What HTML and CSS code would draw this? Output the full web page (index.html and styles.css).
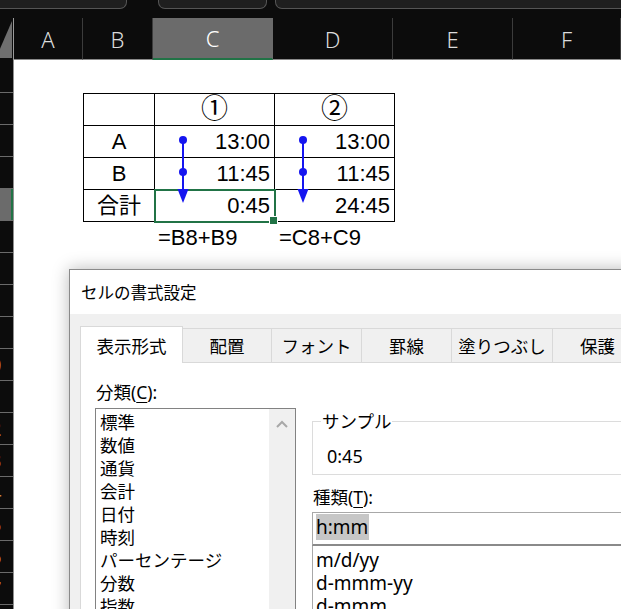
FILE: index.html
```html
<!DOCTYPE html>
<html lang="ja">
<head>
    <meta charset="utf-8">
    <title>セルの書式設定</title>
    <link rel="stylesheet" href="styles.css">
</head>
<body>
    <div class="toolbar">
        <div class="pill pill-name"></div>
        <div class="pill pill-font"></div>
        <div class="pill pill-size"></div>
    </div>

    <!-- column headers -->
    <div class="col-heads">
        <div class="corner">
            <svg width="13" height="42" viewBox="0 0 13 42"><polygon points="12,3 12,40 -4,40" fill="#6f6f6f"/></svg>
        </div>
        <div class="col-head">A</div>
        <div class="col-head">B</div>
        <div class="col-head selected">C</div>
        <div class="col-head">D</div>
        <div class="col-head">E</div>
        <div class="col-head">F</div>
    </div>

    <div class="sheet">
        <div class="row-heads">
            <div class="row-head"><span>1</span></div>
            <div class="row-head"><span>2</span></div>
            <div class="row-head"><span>3</span></div>
            <div class="row-head"><span>4</span></div>
            <div class="row-head selected"><span>5</span></div>
            <div class="row-head"><span>6</span></div>
            <div class="row-head"><span>7</span></div>
            <div class="row-head"><span>8</span></div>
            <div class="row-head"><span>9</span></div>
            <div class="row-head"><span>10</span></div>
            <div class="row-head"><span>11</span></div>
            <div class="row-head"><span>12</span></div>
            <div class="row-head"><span>13</span></div>
            <div class="row-head"><span>14</span></div>
            <div class="row-head"><span>15</span></div>
            <div class="row-head"><span>16</span></div>
            <div class="row-head"><span>17</span></div>
            <div class="row-head"><span>18</span></div>
        </div>

        <div class="cells">
            <div class="table-wrap">
                <table class="data">
                    <colgroup><col class="col-b"><col class="col-c"><col class="col-d"></colgroup>
                    <tr><td></td><td class="center circ">①</td><td class="center circ">②</td></tr>
                    <tr><td class="center">A</td><td class="num">13:00</td><td class="num">13:00</td></tr>
                    <tr><td class="center">B</td><td class="num">11:45</td><td class="num">11:45</td></tr>
                    <tr><td class="center">合計</td><td class="num active">0:45</td><td class="num">24:45</td></tr>
                </table>
                <!-- blue trace arrows drawn over the table -->
                <svg class="arrows" width="311" height="128" viewBox="0 0 311 128">
                    <g fill="#1515f0" stroke="#1515f0">
                        <line x1="100" y1="47" x2="100" y2="97" stroke-width="2"/>
                        <circle cx="100" cy="47" r="4" stroke="none"/>
                        <circle cx="100" cy="79" r="4" stroke="none"/>
                        <polygon points="94.5,96 105.5,96 100,110" stroke="none"/>
                        <line x1="220" y1="47" x2="220" y2="97" stroke-width="2"/>
                        <circle cx="220" cy="47" r="4" stroke="none"/>
                        <circle cx="220" cy="79" r="4" stroke="none"/>
                        <polygon points="214.5,96 225.5,96 220,110" stroke="none"/>
                    </g>
                </svg>
            </div>
            <div class="formulas">
                <span>=B8+B9</span>
                <span>=C8+C9</span>
            </div>
        </div>
    </div>

    <!-- Format Cells dialog -->
    <div class="dialog">
        <div class="dialog-title">セルの書式設定</div>
        <div class="dialog-body">
            <div class="tabs">
                <div class="tab active w103">表示形式</div>
                <div class="tab w89">配置</div>
                <div class="tab w90">フォント</div>
                <div class="tab w90">罫線</div>
                <div class="tab w101">塗りつぶし</div>
                <div class="tab w90">保護</div>
            </div>
            <div class="panel">
                <div class="left-col">
                    <div class="field-label">分類(<u>C</u>):</div>
                    <div class="listbox">
                        <div class="list-items">
                            <div>標準</div>
                            <div>数値</div>
                            <div>通貨</div>
                            <div>会計</div>
                            <div>日付</div>
                            <div>時刻</div>
                            <div>パーセンテージ</div>
                            <div>分数</div>
                            <div>指数</div>
                            <div>文字列</div>
                        </div>
                        <div class="scrollbar">
                            <svg width="12" height="8" viewBox="0 0 12 8"><polyline points="1,7 6,2 11,7" fill="none" stroke="#a8a8a8" stroke-width="2"/></svg>
                        </div>
                    </div>
                </div>
                <div class="right-col">
                    <fieldset class="sample">
                        <legend>サンプル</legend>
                        <div class="sample-value">0:45</div>
                    </fieldset>
                    <div class="field-label">種類(<u>T</u>):</div>
                    <div class="type-input"><span class="sel">h:mm</span></div>
                    <div class="type-list">
                        <div>m/d/yy</div>
                        <div>d-mmm-yy</div>
                        <div>d-mmm</div>
                        <div>mmm-yy</div>
                    </div>
                </div>
            </div>
        </div>
    </div>
</body>
</html>
```

FILE: styles.css
```css
* { box-sizing: border-box; }

html, body { margin: 0; height: 100%; }

body {
    background-color: #0c0c0c;
    overflow: hidden;
    position: relative;
    font-family: "Noto Sans", "Noto Sans CJK JP", sans-serif;
}

/* --- TOP STRIP --- */
.toolbar { display: flex; height: 18px; }
.pill {
    height: 9px;
    background-color: #1f1f1f;
    border: 1px solid #555;
    border-top: none;
    border-radius: 0 0 7px 7px;
}
.pill-name { width: 135px; margin-left: -8px; }
.pill-font { width: 109px; margin-left: 31px; }
.pill-size { flex: 1; margin-left: 8px; margin-right: -12px; }

/* --- COLUMN HEADERS --- */
.col-heads {
    display: grid;
    grid-template-columns: 14px 69px 70px 120px 120px 120px 1fr;
    height: 42px;
}
.corner { border-right: 1px solid #9a9a9a; }
.corner svg { display: block; }
.col-head {
    display: flex;
    align-items: center;
    justify-content: center;
    color: #dcdcdc;
    font-size: 22px;
    font-weight: 300;
    border-right: 1px solid #3c3c3c;
    border-bottom: 1px solid #8a8a8a;
}
.col-head.selected {
    background-color: #6b6b6b;
    color: #fff;
    border-right-color: #6b6b6b;
    border-bottom: 2px solid #217346;
}

/* --- SHEET --- */
.sheet { display: flex; height: 549px; }
.row-heads { width: 14px; flex: none; border-right: 1px solid #8f8f8f; }
.row-head {
    height: 32px;
    border-bottom: 1px solid #6a6a6a;
    overflow: hidden;
}
.row-head:first-child { height: 33px; }
.row-head span {
    display: block;
    width: 44px;
    margin-left: -32px;
    text-align: center;
    line-height: 31px;
    font-size: 20px;
    color: #c98846;
}
.row-head.selected { background-color: #6b6b6b; box-shadow: inset -2px 0 0 #217346; }
.row-head.selected span { color: #6b6b6b; }

.cells { flex: 1; background-color: #fff; }

.table-wrap { position: relative; width: 311px; margin: 33px 0 0 69px; }
.data {
    border-collapse: collapse;
    table-layout: fixed;
    width: 311px;
    font-family: "Liberation Sans", "Noto Sans CJK JP", sans-serif;
    font-size: 22px;
    color: #000;
}
.col-b { width: 71px; }
.col-c, .col-d { width: 120px; }
.data td { border: 1px solid #000; height: 32px; padding: 0 4px; line-height: 1; }
.data td.center { text-align: center; }
.data td.circ { font-size: 27px; }
.data td.num { text-align: right; }
.data td.active { outline: 2px solid #217346; outline-offset: -1px; position: relative; }
.data td.active::after {
    content: "";
    position: absolute;
    right: -4px;
    bottom: -4px;
    width: 7px;
    height: 7px;
    background-color: #217346;
    border: 1px solid #fff;
}
.arrows { position: absolute; left: 0; top: 0; pointer-events: none; }

.formulas {
    display: flex;
    align-items: center;
    height: 32px;
    margin-left: 139px;
    font-family: "Liberation Sans", sans-serif;
    font-size: 22px;
    color: #000;
}
.formulas span { width: 120px; padding-left: 5px; }
.formulas span + span { padding-left: 6px; }

/* --- DIALOG --- */
.dialog {
    position: absolute;
    left: 69px;
    top: 269px;
    width: 640px;
    height: 420px;
    background-color: #f0f0f0;
    border: 1px solid #8a8a8a;
    box-shadow: 0 0 16px rgba(0, 0, 0, 0.28);
    color: #000;
}
.dialog-title {
    height: 44px;
    background-color: #fff;
    padding-left: 11px;
    display: flex;
    align-items: center;
    font-size: 16.5px;
}
.dialog-body { padding: 12px 0 0 10px; }

.tabs { display: flex; align-items: flex-end; height: 36px; }
.tab {
    height: 34px;
    display: flex;
    align-items: center;
    justify-content: center;
    font-size: 17.5px;
    border-top: 1px solid #d9d9d9;
    border-right: 1px solid #d9d9d9;
    flex: none;
}
.tab.active {
    height: 37px;
    margin-bottom: -1px;
    background-color: #fff;
    border-left: 1px solid #d9d9d9;
    position: relative;
    z-index: 1;
}
.w89 { width: 89px; }
.w90 { width: 90px; }
.w101 { width: 101px; }
.w103 { width: 103px; }

.panel {
    display: flex;
    gap: 16px;
    height: 340px;
    background-color: #fff;
    border: 1px solid #d9d9d9;
    padding: 17px 0 0 14px;
}
.field-label { font-size: 17.5px; line-height: 24px; padding-left: 1px; }
.field-label u { text-underline-offset: 3px; }

.left-col { width: 201px; flex: none; }
.listbox {
    display: flex;
    height: 260px;
    margin-top: 4px;
    border: 1px solid #828282;
}
.list-items {
    flex: 1;
    padding: 2px 0 0 4px;
    font-size: 17.5px;
    line-height: 23px;
}
.scrollbar {
    width: 26px;
    background-color: #f0f0f0;
    display: flex;
    justify-content: center;
    padding-top: 11px;
}
.scrollbar svg { display: block; }

.right-col { flex: 1; }
.sample {
    margin: 29px 0 0;
    padding: 9px 0 4px 14px;
    border: 1px solid #dcdcdc;
    min-width: 0;
}
.sample legend { font-size: 17.5px; line-height: 24px; padding: 0 1px; margin-left: -6px; }
.sample-value { font-size: 18px; line-height: 28px; }
.right-col .field-label { margin-top: 10px; }

.type-input {
    height: 34px;
    margin-top: 3px;
    border: 1px solid #a8a8a8;
    border-bottom: 2px solid #8a8a8a;
    padding: 3px 0 0 3px;
    font-size: 19px;
    line-height: 23px;
}
.type-input .sel { background-color: #c6c6c6; padding: 0 1px 0 0; }
.type-list {
    height: 120px;
    border: 1px solid #a8a8a8;
    border-top: none;
    padding: 3px 0 0 3px;
    font-size: 19px;
    line-height: 23px;
}
```
